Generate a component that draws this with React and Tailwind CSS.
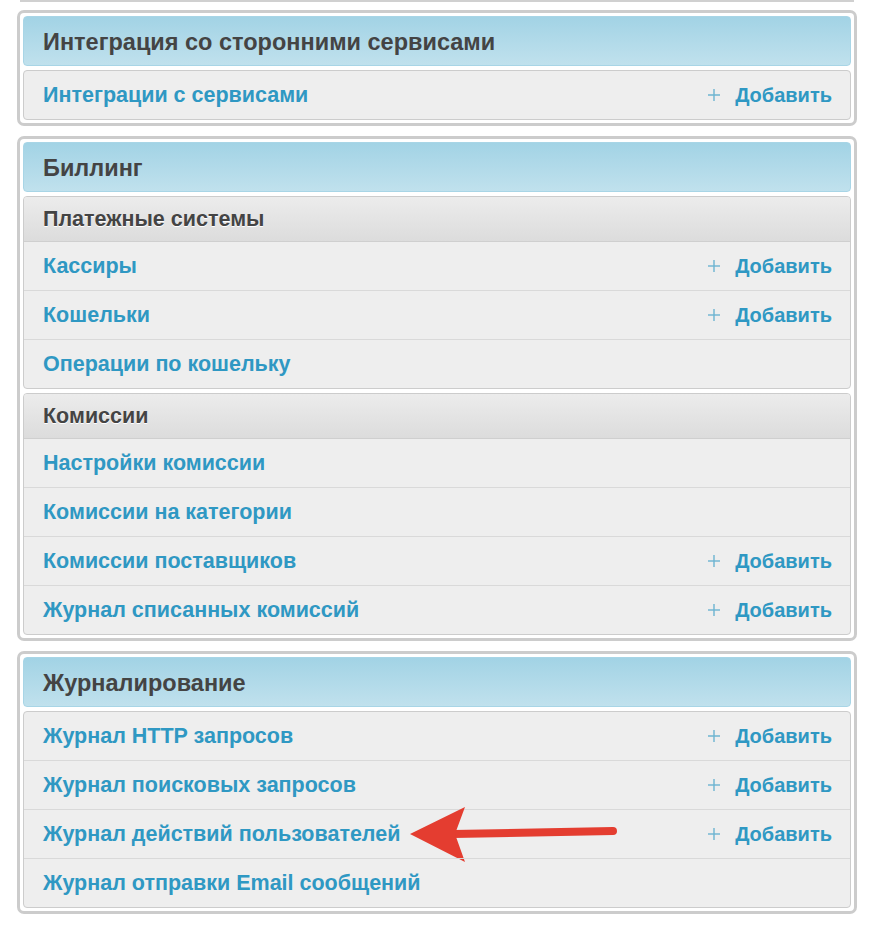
import React from 'react';

const groups = [
  {
    title: 'Интеграция со сторонними сервисами',
    sections: [
      { rows: [{ name: 'Интеграции с сервисами', add: true }] },
    ],
  },
  {
    title: 'Биллинг',
    sections: [
      {
        label: 'Платежные системы',
        rows: [
          { name: 'Кассиры', add: true },
          { name: 'Кошельки', add: true },
          { name: 'Операции по кошельку' },
        ],
      },
      {
        label: 'Комиссии',
        rows: [
          { name: 'Настройки комиссии' },
          { name: 'Комиссии на категории' },
          { name: 'Комиссии поставщиков', add: true },
          { name: 'Журнал списанных комиссий', add: true },
        ],
      },
    ],
  },
  {
    title: 'Журналирование',
    sections: [
      {
        rows: [
          { name: 'Журнал HTTP запросов', add: true },
          { name: 'Журнал поисковых запросов', add: true },
          { name: 'Журнал действий пользователей', add: true, arrow: true },
          { name: 'Журнал отправки Email сообщений' },
        ],
      },
    ],
  },
];

const PlusIcon = () => (
  <svg width="12" height="12" viewBox="0 0 12 12" className="mr-[15px]">
    <line x1="6" y1="0" x2="6" y2="12" stroke="#6cb4d1" strokeWidth="1.4" />
    <line x1="0" y1="6" x2="12" y2="6" stroke="#6cb4d1" strokeWidth="1.4" />
  </svg>
);

// red annotation arrow pointing at the row
const Arrow = () => (
  <svg
    width="220"
    height="62"
    viewBox="0 0 220 62"
    className="absolute left-[381px] top-[-6px] pointer-events-none"
  >
    <line x1="48" y1="30" x2="208" y2="27" stroke="#e43d30" strokeWidth="8" strokeLinecap="round" />
    <polygon points="5,30 60,3 50,30 60,58" fill="#e43d30" />
  </svg>
);

const Row = ({ row, first }) => (
  <div
    className={`relative flex items-center justify-between pl-[19px] pr-[18px] ${
      first ? 'h-[48px]' : 'h-[49px] border-t border-[#d9d9d9]'
    }`}
  >
    <a href="#" className="text-[#2f98c3] font-bold text-[21.5px]">
      {row.name}
    </a>
    {row.add && (
      <a href="#" className="flex items-center text-[#2f98c3] font-bold text-[20px]">
        <PlusIcon />
        Добавить
      </a>
    )}
    {row.arrow && <Arrow />}
  </div>
);

export default function App() {
  return (
    <div
      className="bg-white min-h-[936px] pb-[20px]"
      style={{ fontFamily: '"Liberation Sans", Arial, sans-serif' }}
    >
      <div className="h-[2px] ml-[20px] mr-[24px] bg-[#d0d0d0]" />
      <div className="flex flex-col gap-[10px] mt-[8px] ml-[17px] mr-[21px]">
        {groups.map((g) => (
          <div
            key={g.title}
            className="border-[3px] border-[#cccccc] rounded-[7px] p-[3px] bg-white flex flex-col gap-[4px]"
          >
            <div className="h-[50px] flex items-center pl-[19px] pt-[3px] rounded-[4px] border border-[#a8d5e6] bg-gradient-to-b from-[#a2d3e5] to-[#c0e1ed]">
              <h2 className="text-[#444444] font-bold text-[23.5px]">{g.title}</h2>
            </div>
            {g.sections.map((s, i) => (
              <div key={i} className="border border-[#cccccc] rounded-[4px] bg-[#eeeeee] overflow-hidden">
                {s.label && (
                  <div className="h-[45px] flex items-center pl-[19px] bg-gradient-to-b from-[#ececec] to-[#dcdcdc] border-b border-[#cfcfcf]">
                    <span className="text-[#444444] font-bold text-[21.5px] [text-shadow:0_1px_0_#ffffff]">
                      {s.label}
                    </span>
                  </div>
                )}
                {s.rows.map((r, j) => (
                  <Row key={r.name} row={r} first={j === 0} />
                ))}
              </div>
            ))}
          </div>
        ))}
      </div>
    </div>
  );
}
